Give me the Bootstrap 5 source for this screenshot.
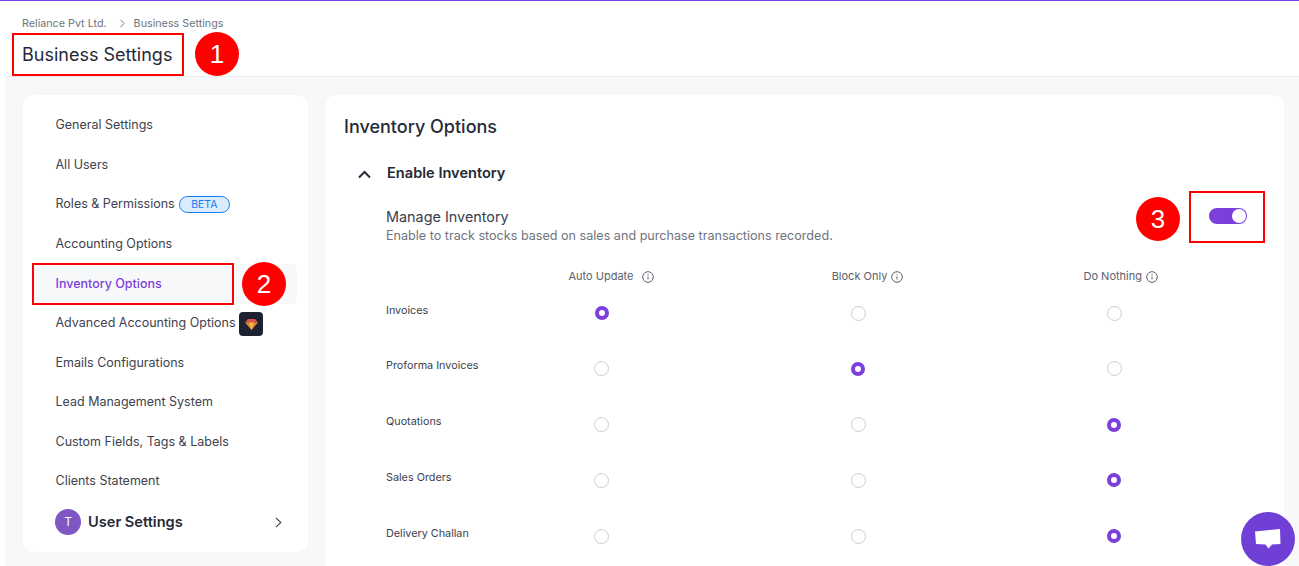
<!DOCTYPE html>
<html lang="en"><head><meta charset="utf-8"><title>Business Settings</title>
<link href="https://cdn.jsdelivr.net/npm/bootstrap@5.3.0/dist/css/bootstrap.min.css" rel="stylesheet">
<style>
html,body{height:566px;overflow:hidden;background:#fff}
body{font-family:Inter,"Liberation Sans",sans-serif;color:#252a36;position:relative;border-top:1px solid #7b3fe4}
.page-top{height:76px;margin-left:5px;padding:15px 0 0 17px;border-bottom:1px solid #e8eaee;background:#fff}
.crumbs{font-size:10.75px;line-height:15px;color:#6f7480}
.crumbs svg{margin:0 8px 0 12px}
.page-title{font-size:18px;font-weight:400;line-height:26px;margin:11px 0 0;color:#1f2937}
.page-body{margin-left:5px;background:#f7f8fa;height:489px;padding:18px 15px 0 18px;gap:18px}
.side-card{width:285px;height:457px;background:#fff;border-radius:10px;padding:11px 10px 10px;flex:none;box-shadow:0 0 2px rgba(0,0,0,.04)}
.side-item{display:flex;align-items:center;height:39.55px;padding-left:22.5px;font-size:12.5px;color:#3d424d;border-radius:6px;width:264px;white-space:nowrap}
.side-item.on{color:#7c3fdc;background:#f7f8fa;font-weight:500}
.beta-tag{font-size:10.5px;line-height:15px;border:1px solid #1a7af0;background:#dcecff;color:#1a7af0;border-radius:10px;padding:0 11.5px;margin-left:4px}
.gem{width:24px;height:24px;background:#1e2230;border-radius:4px;margin-left:4px;margin-top:1px}
.user-row{display:flex;align-items:center;height:40px;padding-left:22px;padding-right:15px;width:264px;margin-top:1px}
.avatar{width:26px;height:26px;border-radius:50%;background:#7e57c2;color:#fff;font-size:12px;margin-right:7px}
.user-row b{font-size:14.6px;font-weight:600;color:#252a36}
.main-card{width:958px;background:#fff;border-radius:10px 10px 0 0;padding:21px 18px 0;height:471px;overflow:hidden}
.main-title{font-size:18px;font-weight:500;line-height:22px;margin:0;color:#252a36}
.sect-head{margin:25px 0 0 13px;height:22px;gap:15px}
.sect-head span{font-size:14.6px;font-weight:600;color:#252a36}
.manage{margin:22px 0 0 42px;height:40px}
.manage h6{font-size:14.4px;font-weight:400;line-height:20px;margin:0;color:#3a404c}
.manage p{font-size:12.6px;line-height:18px;margin:0;color:#6f7480}
.toggle-pill{width:38px;height:16px;background:#7b3fdc;border-radius:8px;margin:1px 19px 0 0;padding:1px;justify-content:flex-end}
.toggle-pill i{display:block;width:14px;height:14px;background:#fff;border-radius:50%}
.opt-grid{display:grid;grid-template-columns:87px 257px 256px 256.5px;margin:16px 0 0 42px;font-size:11px;color:#5b606b}
.opt-head{height:27px;align-items:center;justify-content:center;gap:4px;padding-left:19px}
.opt-head.first{grid-column:2}
.opt-head.last{padding-left:13px}
.opt-row-label{height:55.75px;font-size:10.8px;line-height:16px;color:#3d424d;padding-top:12.5px;white-space:nowrap}
.opt-cell{height:55.75px;padding-top:15.5px}
.radio-off,.radio-on{display:block;width:15px;height:15px;border-radius:50%;margin:0 auto}
.radio-off{border:1px solid #c9ced6;background:#fff}
.radio-on{border:4px solid #7b3fdc;width:14px;height:14px;background:#fff;margin-top:.5px}
.mark-box{position:absolute;border:2px solid #f00;pointer-events:none}
.mark-num{position:absolute;width:44px;height:44px;border-radius:50%;background:#f00;color:#fff;font:400 26px/44px "Liberation Sans",sans-serif;text-align:center}
.chat-bubble{position:absolute;left:1241px;top:511px;width:54px;height:54px;border-radius:50%;background:#7040d6}
</style></head><body>
<header class="page-top">
  <div class="crumbs d-flex align-items-center"><span>Reliance Pvt Ltd.</span><svg width="7" height="9" viewBox="0 0 7 9" fill="none" stroke="#777" stroke-width="1"><path d="M1.5 .8 5.2 4.5 1.5 8.2"/></svg><span>Business Settings</span></div>
  <h1 class="page-title">Business Settings</h1>
</header>
<div class="page-body d-flex">
  <nav class="side-card">
    <div class="side-item">General Settings</div>
    <div class="side-item">All Users</div>
    <div class="side-item">Roles &amp; Permissions<span class="beta-tag">BETA</span></div>
    <div class="side-item">Accounting Options</div>
    <div class="side-item on">Inventory Options</div>
    <div class="side-item">Advanced Accounting Options<span class="gem d-flex align-items-center justify-content-center"><svg width="13" height="11" viewBox="0 0 13 11"><path d="M3 0h7l3 3.5H0z" fill="#d9534a"/><path d="M0 3.5h13L6.5 11z" fill="#e8823d"/><path d="M4 3.5h5L6.5 11z" fill="#f6b93f"/></svg></span></div>
    <div class="side-item">Emails Configurations</div>
    <div class="side-item">Lead Management System</div>
    <div class="side-item">Custom Fields, Tags &amp; Labels</div>
    <div class="side-item">Clients Statement</div>
    <div class="user-row"><span class="avatar d-flex align-items-center justify-content-center">T</span><b>User Settings</b>
      <svg class="ms-auto" width="7" height="11" viewBox="0 0 7 11" fill="none" stroke="#444" stroke-width="1.1"><path d="M1 .8 5.8 5.5 1 10.2"/></svg></div>
  </nav>
  <main class="main-card">
    <h2 class="main-title">Inventory Options</h2>
    <div class="sect-head d-flex align-items-center">
      <svg width="15" height="9" viewBox="0 0 15 9" fill="none" stroke="#252a36" stroke-width="2"><path d="M2 7.5 7.500 2 13 7.500"/></svg>
      <span>Enable Inventory</span>
    </div>
    <div class="manage d-flex justify-content-between">
      <div><h6>Manage Inventory</h6><p>Enable to track stocks based on sales and purchase transactions recorded.</p></div>
      <div class="toggle-pill d-flex"><i></i></div>
    </div>
    <div class="opt-grid">
      <div class="d-flex opt-head first"><span>Auto Update</span><svg class="ms-1" width="12" height="12" viewBox="0 0 12 12" fill="none" stroke="#5b606b"><circle cx="6" cy="6" r="5.3"/><path d="M6 5.3v3.200M6 3.200v1"/></svg></div>
      <div class="d-flex opt-head"><span>Block Only</span><svg width="12" height="12" viewBox="0 0 12 12" fill="none" stroke="#5b606b"><circle cx="6" cy="6" r="5.3"/><path d="M6 5.3v3.200M6 3.200v1"/></svg></div>
      <div class="d-flex opt-head last"><span>Do Nothing</span><svg width="12" height="12" viewBox="0 0 12 12" fill="none" stroke="#5b606b"><circle cx="6" cy="6" r="5.3"/><path d="M6 5.3v3.200M6 3.200v1"/></svg></div>
      <div class="opt-row-label">Invoices</div><div class="opt-cell"><span class="radio-on"></span></div><div class="opt-cell"><span class="radio-off"></span></div><div class="opt-cell"><span class="radio-off"></span></div>
      <div class="opt-row-label">Proforma Invoices</div><div class="opt-cell"><span class="radio-off"></span></div><div class="opt-cell"><span class="radio-on"></span></div><div class="opt-cell"><span class="radio-off"></span></div>
      <div class="opt-row-label">Quotations</div><div class="opt-cell"><span class="radio-off"></span></div><div class="opt-cell"><span class="radio-off"></span></div><div class="opt-cell"><span class="radio-on"></span></div>
      <div class="opt-row-label">Sales Orders</div><div class="opt-cell"><span class="radio-off"></span></div><div class="opt-cell"><span class="radio-off"></span></div><div class="opt-cell"><span class="radio-on"></span></div>
      <div class="opt-row-label">Delivery Challan</div><div class="opt-cell"><span class="radio-off"></span></div><div class="opt-cell"><span class="radio-off"></span></div><div class="opt-cell"><span class="radio-on"></span></div>
    </div>
  </main>
</div>
<div class="mark-box" style="left:12px;top:32px;width:172px;height:43px"></div>
<div class="mark-num" style="left:195px;top:31px">1</div>
<div class="mark-box" style="left:32px;top:262px;width:202px;height:42px"></div>
<div class="mark-num" style="left:242px;top:261px">2</div>
<div class="mark-box" style="left:1189px;top:190px;width:76px;height:52px"></div>
<div class="mark-num" style="left:1136px;top:196px">3</div>
<div class="chat-bubble d-flex align-items-center justify-content-center"><svg width="26" height="22" viewBox="0 0 26 22"><path d="M0 3.5 25 1l.5 15-8.500.5-3.500 4-3-4-9.500-.5z" fill="#fff"/></svg></div>
<script src="https://cdn.jsdelivr.net/npm/bootstrap@5.3.0/dist/js/bootstrap.bundle.min.js"></script>
</body></html>
